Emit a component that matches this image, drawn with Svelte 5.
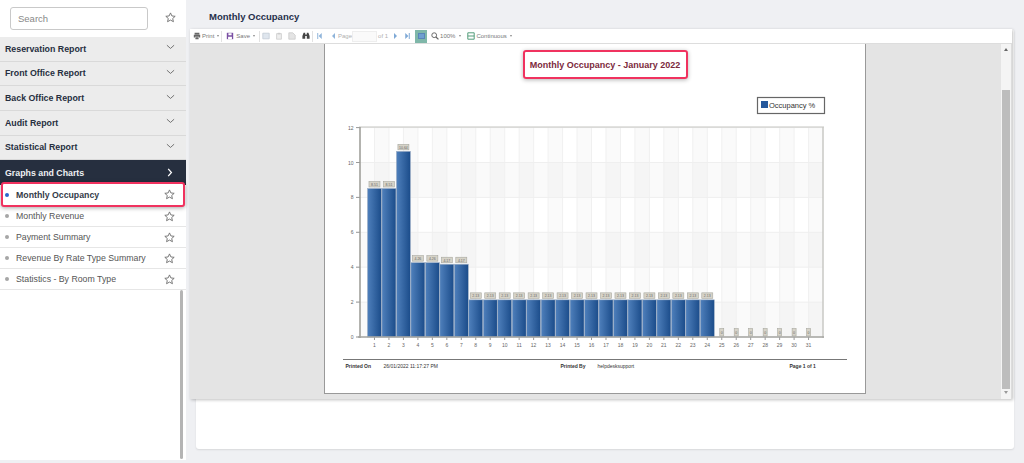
<script>
  const groups = ['Reservation Report', 'Front Office Report', 'Back Office Report', 'Audit Report', 'Statistical Report'];
  const items = ['Monthly Occupancy', 'Monthly Revenue', 'Payment Summary', 'Revenue By Rate Type Summary', 'Statistics - By Room Type'];
  const starPath = 'M6 1l1.5 3.3 3.6.4-2.7 2.4.8 3.5L6 8.8l-3.2 1.8.8-3.5L.9 4.7l3.6-.4z';

  const tickX = (i) => 359 + 14.47 * i;
  const valueY = (v) => 337 - v * 17.45;
  const values = [];
  for (let d = 1; d <= 31; d++) {
    let v = 0, label = '0';
    if (d <= 2) { v = 8.51; label = '8.51'; }
    else if (d === 3) { v = 10.64; label = '10.64'; }
    else if (d <= 5) { v = 4.26; label = '4.26'; }
    else if (d <= 7) { v = 4.17; label = '4.17'; }
    else if (d <= 24) { v = 2.13; label = '2.13'; }
    values.push({ d, v, label });
  }
  const yTicks = [0, 2, 4, 6, 8, 10, 12];
  const stripes = Array.from({ length: 16 }, (_, i) => 1 + i * 2).filter((i) => i < 32);
</script>

<div class="app">
  <aside class="side">
    <div class="searchrow">
      <input class="search" placeholder="Search" />
      <svg class="star big" viewBox="0 0 12 12"><path d={starPath} /></svg>
    </div>
    {#each groups as g}
      <div class="group"><span>{g}</span>
        <svg class="chev" viewBox="0 0 10 6"><path d="M1 1l4 3.6L9 1" /></svg>
      </div>
    {/each}
    <div class="group dark"><span>Graphs and Charts</span>
      <svg class="chevr" viewBox="0 0 6 10"><path d="M1 1l3.6 4L1 9" /></svg>
    </div>
    {#each items as it, i}
      <div class="item" class:active={i === 0}>
        <i class="dot"></i><span>{it}</span>
        <svg class="star" viewBox="0 0 12 12"><path d={starPath} /></svg>
      </div>
    {/each}
    <div class="sidescroll"></div>
  </aside>

  <main class="main">
    <h1 class="title">Monthly Occupancy</h1>
    <div class="card">
      <div class="viewer">
        <div class="toolbar">
          <svg class="ic w1" viewBox="0 0 10 10"><path fill="#666" d="M2 1h6v2H2zM1 3.5h8V7H7.500V6h-5v1H1zM3 6.500h4V9H3z" /></svg>
          <span class="tx s1">Print</span><i class="caret c1"></i><i class="sep s2"></i>
          <svg class="ic s3" viewBox="0 0 10 10"><path fill="#7a4fa3" d="M1 1h8v8H1z" /><path fill="#fff" d="M3 1.600h4v2.600H3zM2.600 6h4.800v3H2.600z" /></svg>
          <span class="tx s4">Save</span><i class="caret c1"></i><i class="sep s5"></i>
          <svg class="ic s6" viewBox="0 0 10 10"><path fill="#dfe6ee" stroke="#c4ccd6" d="M1 1.500h8v7H1z" /></svg>
          <svg class="ic s7" viewBox="0 0 10 10"><path fill="#eee" stroke="#ccc" d="M2 2h6v7H2z" /><path fill="#ccc" d="M3.500 1h3v2h-3z" /></svg>
          <svg class="ic s7" viewBox="0 0 10 10"><path fill="#e4e4e4" stroke="#ccc" d="M1 1h5l3 3v5H1z" /></svg>
          <svg class="ic s8" viewBox="0 0 10 10"><path fill="#444" d="M.5 5l1.500-4h2v2h2V1h2l1.500 4v3.500H6V5H4v3.500H.5z" /></svg>
          <i class="sep s9"></i>
          <svg class="nav s10" viewBox="0 0 6 8"><path fill="#8fb4da" d="M0 0h1.300v8H0zM6 0v8L1.800 4z" /></svg>
          <svg class="nav s11" viewBox="0 0 6 8"><path fill="#8fb4da" d="M5 0v8L1 4z" /></svg>
          <span class="tx pale s12">Page</span>
          <span class="pagebox"></span>
          <span class="tx pale s13">of 1</span>
          <svg class="nav s14" viewBox="0 0 6 8"><path fill="#7fa9d6" d="M1 0v8l4-4z" /></svg>
          <svg class="nav s15" viewBox="0 0 6 8"><path fill="#7fa9d6" d="M6 0H4.700v8H6zM0 0v8l4.200-4z" /></svg>
          <span class="activebtn"><i></i></span>
          <svg class="ic s16" viewBox="0 0 10 10"><circle cx="4" cy="4" r="3" fill="none" stroke="#666" stroke-width="1.200" /><path d="M6.200 6.200L9.300 9.300" stroke="#666" stroke-width="1.500" /></svg>
          <span class="tx s17">100%</span><i class="caret c2"></i>
          <svg class="ic s18" viewBox="0 0 10 10"><path fill="none" stroke="#4d9a76" stroke-width="1.200" d="M1 1h8v8H1zM1 5h8" /></svg>
          <span class="tx s19">Continuous</span><i class="caret c1"></i>
        </div>
        <div class="body">
          <div class="canvas">
            <div class="page">
              <div class="rtitle"><span>Monthly Occupancy - January 2022</span></div>
              <svg class="chart" viewBox="324 79 540 279" width="540" height="279">
                <defs>
                  <linearGradient id="bar" x1="0" x2="1" y1="0" y2="0">
                    <stop offset="0" stop-color="#4f80bc" />
                    <stop offset="1" stop-color="#1b4c8a" />
                  </linearGradient>
                </defs>

                <rect x="756.500" y="97.500" width="67" height="16" fill="#fff" stroke="#666" stroke-width="1.200" />
                <rect x="760" y="101" width="7" height="7" fill="#27599b" />
                <text x="768" y="107.500" class="legend">Occupancy %</text>

                {#each [0, 4, 8] as v}
                  <rect x="359" y={valueY(v + 2)} width="463" height="34.900" fill="#fafafa" />
                {/each}
                {#each stripes as i}
                  <rect x={tickX(i)} y="127" width="14.470" height="210" fill="#888" opacity="0.04" />
                {/each}
                {#each values as b}
                  <line x1={tickX(b.d)} x2={tickX(b.d)} y1="127" y2="337" stroke="#f0f0f0" />
                {/each}
                {#each yTicks as t}
                  <line x1="355" x2="822" y1={valueY(t)} y2={valueY(t)} stroke="#efefef" />
                  <line x1="355" x2="359" y1={valueY(t)} y2={valueY(t)} stroke="#999" />
                  <text x="352.500" y={valueY(t) + 2} text-anchor="end" class="axis">{t}</text>
                {/each}
                <line x1="358" x2="823" y1="127" y2="127" stroke="#c4c4c0" />
                <line x1="822" x2="822" y1="127" y2="338" stroke="#c8c8c4" stroke-width="1.500" />
                <line x1="359" x2="359" y1="127" y2="338" stroke="#9a9a94" stroke-width="1.500" />

                {#each values as b}
                  {#if b.v > 0}
                    <rect x={tickX(b.d) - 7} y={valueY(b.v)} width="14" height={b.v * 17.45} fill="url(#bar)" stroke="#9fb0c6" stroke-width="0.600" />
                    <rect x={tickX(b.d) - 5.500} y={valueY(b.v) - 7} width="11" height="5.500" fill="#d6d3c8" stroke="#a8a8a0" stroke-width="0.600" />
                    <text x={tickX(b.d)} y={valueY(b.v) - 2.700} text-anchor="middle" class="val">{b.label}</text>
                  {:else}
                    <rect x={tickX(b.d) - 2} y="328.500" width="4" height="7.500" fill="#d6d3c8" stroke="#a8a8a0" stroke-width="0.600" />
                    <text x={tickX(b.d)} y="334" text-anchor="middle" class="val">0</text>
                  {/if}
                  <line x1={tickX(b.d)} x2={tickX(b.d)} y1="337" y2="340" stroke="#999" />
                  <text x={tickX(b.d)} y="347" text-anchor="middle" class="axis">{b.d}</text>
                {/each}
                <line x1="357" x2="823" y1="337" y2="337" stroke="#a5a5a0" stroke-width="1.500" />
              </svg>
              <div class="foot">
                <b class="f1">Printed On</b><span class="f2">26/01/2022 11:17:27 PM</span>
                <b class="f3">Printed By</b><span class="f4">helpdesksupport</span>
                <b class="f5">Page 1 of 1</b>
              </div>
            </div>
          </div>
          <div class="vscroll">
            <i class="up"></i>
            <div class="thumb"></div>
            <i class="down"></i>
          </div>
        </div>
      </div>
    </div>
  </main>
</div>

<style>
  :global(body) {
    margin: 0;
    background: #eff0f3;
    overflow: hidden;
  }
  .app {
    display: flex;
    width: 1024px;
    height: 463px;
    font-family: "Liberation Sans", Arial, sans-serif;
    background: #eff0f3;
    overflow: hidden;
  }
  .side {
    position: relative;
    width: 186px;
    height: 460px;
    flex: none;
    background: #fff;
  }
  .searchrow {
    display: flex;
    align-items: center;
    height: 37px;
    padding: 0 10px;
    box-sizing: border-box;
  }
  .search {
    width: 138px;
    height: 23px;
    box-sizing: border-box;
    border: 1px solid #c9c9c9;
    border-radius: 3px;
    padding: 0 7px;
    font: 9.500px "Liberation Sans", Arial, sans-serif;
    margin-top: -1px;
  }
  .search::placeholder { color: #888; opacity: 1; }
  .star {
    width: 11px;
    height: 11px;
    fill: none;
    stroke: #6f6f6f;
    stroke-width: 1;
    flex: none;
  }
  .star.big { margin-left: 17px; margin-top: -3px; }
  .group {
    display: flex;
    align-items: center;
    justify-content: space-between;
    height: 23.670px;
    padding: 0 11px 0 5px;
    background: #ececec;
    border-bottom: 1px solid #d9d9d9;
    font-size: 8.800px;
    font-weight: 700;
    color: #262f3f;
  }
  .group.dark {
    background: #262f3f;
    color: #eef0f3;
    border-bottom: 0;
    height: 24.670px;
    padding-right: 13px;
  }
  .chev {
    width: 9px;
    height: 6px;
    fill: none;
    stroke: #666;
    stroke-width: 1;
    margin-top: -3px;
  }
  .chevr {
    width: 6px;
    height: 9px;
    fill: none;
    stroke: #fff;
    stroke-width: 1.400;
  }
  .item {
    display: flex;
    align-items: center;
    height: 20px;
    padding: 0 11px 0 5px;
    background: #fff;
    border-bottom: 1px solid #e6e6e6;
    font-size: 8.760px;
    color: #555;
  }
  .item span { margin-left: 7px; flex: 1; white-space: nowrap; }
  .dot {
    width: 4px;
    height: 4px;
    border-radius: 50%;
    background: #a6a6a6;
    flex: none;
  }
  .item.active {
    position: relative;
    box-sizing: border-box;
    width: 184px;
    height: 25px;
    margin: -2.670px 1px -1px;
    padding: 0 8px 0 2px;
    border: 2px solid #f0325f;
    border-radius: 3px;
    box-shadow: 0 1px 4px rgba(0, 0, 0, 0.35);
    font-weight: 700;
    color: #333a48;
  }
  .item.active .dot { background: #2a66cc; }
  .sidescroll {
    position: absolute;
    left: 180px;
    top: 290px;
    width: 3px;
    height: 169px;
    background: #b4b4b4;
    border-radius: 2px;
  }
  .main {
    flex: 1;
    min-width: 0;
  }
  .title {
    margin: 0;
    height: 29px;
    box-sizing: border-box;
    padding: 10px 0 0 23px;
    font-size: 9.500px;
    line-height: 13px;
    font-weight: 700;
    color: #262f4a;
  }
  .card {
    margin-left: 10px;
    width: 818px;
    height: 420px;
    background: #fff;
    border-radius: 3px;
    box-shadow: 0 1px 2px rgba(0, 0, 0, 0.1);
  }
  .viewer {
    margin-left: -6px;
    width: 822px;
    height: 370px;
    display: flex;
    flex-direction: column;
    box-shadow: 1px 1px 3px rgba(0, 0, 0, 0.25);
    background: #fff;
  }
  .toolbar {
    height: 15px;
    flex: none;
    display: flex;
    align-items: center;
    padding-left: 3px;
    box-sizing: border-box;
    background: #fff;
    border-bottom: 1px solid #ddd;
    font-size: 6px;
    color: #777;
  }
  .tx { white-space: nowrap; line-height: 8px; }
  .pale { color: #b0b0b0; }
  .ic { width: 8px; height: 8px; flex: none; }
  .nav { width: 5px; height: 6px; flex: none; }
  .caret {
    width: 0;
    height: 0;
    border: 1.500px solid transparent;
    border-top: 2px solid #888;
    border-bottom: 0;
    flex: none;
    margin-left: 3px;
  }
  .sep { width: 1px; height: 11px; background: #e2e2e2; flex: none; }
  .s1 { margin-left: 1px; }
  .s2 { margin-left: 2px; }
  .s3 { margin-left: 4px; }
  .s4 { margin-left: 2px; }
  .s5 { margin-left: 4px; }
  .s6 { margin-left: 2px; }
  .s7 { margin-left: 5px; }
  .s8 { margin-left: 6px; }
  .s9 { margin-left: 2px; }
  .s10 { margin-left: 4px; }
  .s11 { margin-left: 9px; }
  .s12 { margin-left: 2px; }
  .pagebox {
    width: 25px;
    height: 11px;
    box-sizing: border-box;
    border: 1px solid #eee;
    background: #fafafa;
    flex: none;
    margin-left: 0;
  }
  .s13 { margin-left: 1px; }
  .s14 { margin-left: 5px; }
  .s15 { margin-left: 7px; }
  .activebtn {
    width: 12px;
    height: 13px;
    margin-left: 5px;
    background: #7fb7a9;
    display: flex;
    align-items: center;
    justify-content: center;
    flex: none;
  }
  .activebtn i { width: 7px; height: 6px; background: #6f9fd0; border: 1px solid #5a86b8; box-sizing: border-box; }
  .s16 { margin-left: 4px; }
  .s17 { margin-left: 1px; }
  .c2 { margin-left: 4px; }
  .s18 { margin-left: 6px; }
  .s19 { margin-left: 1px; }
  .body {
    flex: 1;
    display: flex;
    min-height: 0;
  }
  .canvas {
    flex: 1;
    background: #e4e4e4;
    display: flex;
    justify-content: center;
    align-items: flex-start;
    overflow: hidden;
    padding-right: 2px;
  }
  .page {
    width: 542px;
    height: 350px;
    background: #fff;
    border: 1px solid #999;
    border-top: 0;
    box-sizing: border-box;
    flex: none;
  }
  .rtitle {
    display: flex;
    align-items: center;
    justify-content: center;
    box-sizing: border-box;
    width: 165px;
    height: 29px;
    margin: 6px 0 0 198px;
    border: 2px solid #f0325f;
    border-radius: 3px;
    box-shadow: 0 1px 4px rgba(0, 0, 0, 0.3);
    font-size: 9px;
    font-weight: 700;
    color: #7c2a3c;
    white-space: nowrap;
  }
  .chart { display: block; }
  .legend { font-size: 7.500px; fill: #333; font-family: "Liberation Sans", Arial, sans-serif; }
  .axis { font-size: 5px; fill: #666; font-family: "Liberation Sans", Arial, sans-serif; }
  .val { font-size: 3.500px; fill: #666; font-family: "Liberation Sans", Arial, sans-serif; }
  .foot {
    margin: 1px 18px 0 18px;
    border-top: 1.500px solid #777;
    padding-top: 3px;
    display: flex;
    font-size: 5px;
    line-height: 7px;
    color: #333;
    white-space: nowrap;
  }
  .f1 { margin-left: 3px; width: 38px; }
  .f2 { width: 177px; }
  .f3 { width: 37px; }
  .f4 { width: 192px; }
  .vscroll {
    width: 11px;
    flex: none;
    position: relative;
    background: #f4f4f4;
    border-right: 1px solid #ddd;
    box-sizing: border-box;
  }
  .thumb {
    position: absolute;
    left: 1px;
    right: 1px;
    top: 46px;
    height: 299px;
    background: #bdbdbd;
  }
  .up, .down {
    position: absolute;
    left: 3px;
    width: 0;
    height: 0;
    border: 2px solid transparent;
  }
  .up { top: 4px; border-bottom: 3px solid #666; border-top: 0; }
  .down { bottom: 5px; border-top: 3px solid #999; border-bottom: 0; }
</style>
